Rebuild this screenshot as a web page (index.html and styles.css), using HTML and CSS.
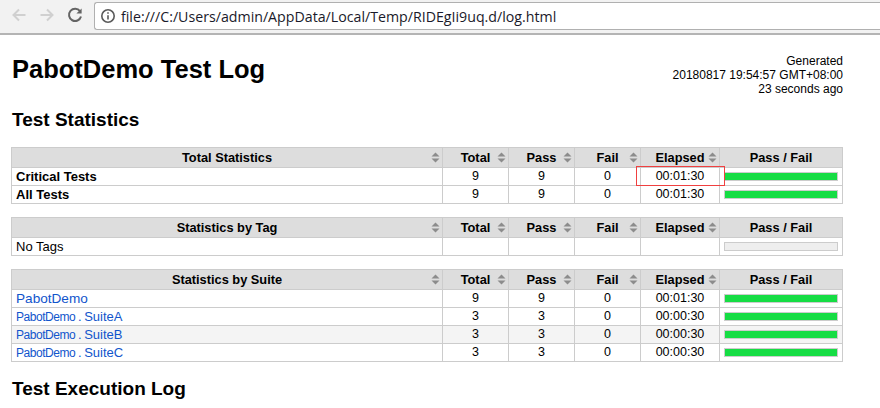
FILE: index.html
```html
<!DOCTYPE html>
<html lang="en">
<head>
    <meta charset="UTF-8">
    <title>PabotDemo Test Log</title>
    <link rel="stylesheet" href="styles.css">
</head>
<body>
    <svg class="defs" width="0" height="0">
        <symbol id="sort" viewBox="0 0 9 11">
            <path d="M4.5 0.5 L8.5 4.5 L0.5 4.5 Z M0.5 6.5 L8.5 6.5 L4.5 10.5 Z"/>
        </symbol>
    </svg>
    <div class="toolbar">
        <svg class="nav-icon" viewBox="0 0 16 16"><path d="M14.5 8H2.5M8 2.5L2.5 8L8 13.5"/></svg>
        <svg class="nav-icon" viewBox="0 0 16 16"><path d="M1.5 8H13.5M8 2.5L13.5 8L8 13.5"/></svg>
        <svg class="nav-icon reload" viewBox="0 0 16 16">
            <path d="M13 4.2A6.1 6.1 0 1 0 14 9.5"/>
            <path class="solid" d="M14.6 1.4V6.6H9.4Z"/>
        </svg>
        <div class="address">
            <svg class="info" viewBox="0 0 16 16">
                <circle cx="8" cy="8" r="6.2"/>
                <path d="M8 7.2V11.6M8 4.2V5.8"/>
            </svg>
            <span class="url">file:///C:/Users/admin/AppData/Local/Temp/RIDEgIi9uq.d/log.html</span>
        </div>
    </div>

    <div class="page">
        <div class="header">
            <h1>PabotDemo Test Log</h1>
            <div class="generated">Generated<br>20180817 19:54:57 GMT+08:00<br>23 seconds ago</div>
        </div>

        <h2 class="stats-title">Test Statistics</h2>

        <table class="stats">
            <tr>
                <th class="name"><div class="th-in"><span>Total Statistics</span><svg class="sort"><use href="#sort"/></svg></div></th>
                <th class="num"><div class="th-in"><span>Total</span><svg class="sort"><use href="#sort"/></svg></div></th>
                <th class="num"><div class="th-in"><span>Pass</span><svg class="sort"><use href="#sort"/></svg></div></th>
                <th class="num"><div class="th-in"><span>Fail</span><svg class="sort"><use href="#sort"/></svg></div></th>
                <th class="time"><div class="th-in"><span>Elapsed</span><svg class="sort"><use href="#sort"/></svg></div></th>
                <th class="graph">Pass / Fail</th>
            </tr>
            <tr>
                <td class="name bold">Critical Tests</td><td>9</td><td>9</td><td>0</td>
                <td class="marked">00:01:30<div class="red-box"></div></td>
                <td><div class="bar"><div class="bar-pass"></div></div></td>
            </tr>
            <tr>
                <td class="name bold">All Tests</td><td>9</td><td>9</td><td>0</td><td>00:01:30</td>
                <td><div class="bar"><div class="bar-pass"></div></div></td>
            </tr>
        </table>

        <table class="stats">
            <tr>
                <th class="name"><div class="th-in"><span>Statistics by Tag</span><svg class="sort"><use href="#sort"/></svg></div></th>
                <th class="num"><div class="th-in"><span>Total</span><svg class="sort"><use href="#sort"/></svg></div></th>
                <th class="num"><div class="th-in"><span>Pass</span><svg class="sort"><use href="#sort"/></svg></div></th>
                <th class="num"><div class="th-in"><span>Fail</span><svg class="sort"><use href="#sort"/></svg></div></th>
                <th class="time"><div class="th-in"><span>Elapsed</span><svg class="sort"><use href="#sort"/></svg></div></th>
                <th class="graph">Pass / Fail</th>
            </tr>
            <tr>
                <td class="name">No Tags</td><td></td><td></td><td></td><td></td>
                <td><div class="bar"></div></td>
            </tr>
        </table>

        <table class="stats">
            <tr>
                <th class="name"><div class="th-in"><span>Statistics by Suite</span><svg class="sort"><use href="#sort"/></svg></div></th>
                <th class="num"><div class="th-in"><span>Total</span><svg class="sort"><use href="#sort"/></svg></div></th>
                <th class="num"><div class="th-in"><span>Pass</span><svg class="sort"><use href="#sort"/></svg></div></th>
                <th class="num"><div class="th-in"><span>Fail</span><svg class="sort"><use href="#sort"/></svg></div></th>
                <th class="time"><div class="th-in"><span>Elapsed</span><svg class="sort"><use href="#sort"/></svg></div></th>
                <th class="graph">Pass / Fail</th>
            </tr>
            <tr>
                <td class="name"><a class="top-suite" href="#">PabotDemo</a></td><td>9</td><td>9</td><td>0</td><td>00:01:30</td>
                <td><div class="bar"><div class="bar-pass"></div></div></td>
            </tr>
            <tr>
                <td class="name"><a href="#"><span class="parent">PabotDemo</span> . SuiteA</a></td><td>3</td><td>3</td><td>0</td><td>00:00:30</td>
                <td><div class="bar"><div class="bar-pass"></div></div></td>
            </tr>
            <tr class="even">
                <td class="name"><a href="#"><span class="parent">PabotDemo</span> . SuiteB</a></td><td>3</td><td>3</td><td>0</td><td>00:00:30</td>
                <td><div class="bar"><div class="bar-pass"></div></div></td>
            </tr>
            <tr>
                <td class="name"><a href="#"><span class="parent">PabotDemo</span> . SuiteC</a></td><td>3</td><td>3</td><td>0</td><td>00:00:30</td>
                <td><div class="bar"><div class="bar-pass"></div></div></td>
            </tr>
        </table>

        <h2 class="log-title">Test Execution Log</h2>
    </div>
</body>
</html>
```

FILE: styles.css
```css
html, body {
    margin: 0;
    padding: 0;
    height: 408px;
    overflow: hidden;
    background: white;
}
body {
    font-family: "Liberation Sans", Arial, sans-serif;
    font-size: 12px;
    color: black;
}
.defs {
    position: absolute;
}

/* browser chrome */
.toolbar {
    height: 35px;
    box-sizing: border-box;
    border-bottom: 2px solid #b4b4b4;
    background: #f2f2f2;
    display: flex;
    align-items: flex-start;
    padding: 7px 0 0 11px;
}
.nav-icon {
    width: 16px;
    height: 16px;
    margin-right: 12px;
    fill: none;
    stroke: #d0d0d0;
    stroke-width: 2;
}
.reload {
    stroke: #646464;
    margin-right: 0;
}
.reload .solid {
    fill: #646464;
    stroke: none;
}
.address {
    margin: -5px 0 0 11px;
    flex: 1;
    height: 28px;
    box-sizing: border-box;
    background: white;
    border: 1px solid #b0b0b0;
    border-right: none;
    border-radius: 3px 0 0 3px;
    display: flex;
    align-items: center;
    padding-left: 5px;
}
.info {
    width: 16px;
    height: 16px;
    fill: none;
    stroke: #5a5a5a;
    stroke-width: 1.6;
    margin-right: 5px;
}
.url {
    font-family: "Open Sans", sans-serif;
    font-size: 14.2px;
    color: #1a1a2a;
}

/* report */
.page {
    padding: 0 37px 0 11px;
}
.header {
    display: flex;
    justify-content: space-between;
    align-items: flex-start;
    padding-top: 19px;
}
h1 {
    margin: 0 0 0 1px;
    font-size: 25.5px;
    line-height: 31px;
}
.generated {
    text-align: right;
    line-height: 14px;
}
h2 {
    margin: 0 0 0 1px;
    font-size: 19px;
    line-height: 22px;
}
.stats-title {
    margin-top: 13px;
}
.log-title {
    margin-top: 16px;
}

.stats {
    width: 832px;
    border-collapse: collapse;
    table-layout: fixed;
    margin-top: 13px;
}
.stats-title + .stats {
    margin-top: 16px;
}
.stats th, .stats td {
    border: 1px solid #ccc;
    padding: 0;
    text-align: center;
    font-size: 12.5px;
}
.stats th {
    background: #ddd;
    height: 19px;
    font-weight: bold;
    font-size: 12.8px;
}
.stats td {
    height: 17px;
    line-height: 17px;
}
.th-in {
    display: grid;
    grid-template-columns: 1fr auto 1fr;
    align-items: center;
}
.th-in span {
    grid-column: 2;
}
.sort {
    grid-column: 3;
    justify-self: end;
    width: 9px;
    height: 11px;
    margin-right: 2px;
    fill: #8c8c8c;
}
.stats .num {
    width: 65px;
}
.stats .time {
    width: 78px;
}
.stats .graph {
    width: 122px;
}
.stats td.name {
    text-align: left;
    padding-left: 4px;
    font-size: 13px;
}
.bold {
    font-weight: bold;
}
.even td {
    background: #f4f4f4;
}
a {
    color: #15c;
    text-decoration: none;
    word-spacing: -1px;
}
.stats td.name .top-suite {
    font-size: 13.6px;
    line-height: 0;
}
.parent {
    font-size: 12px;
    letter-spacing: -0.45px;
    line-height: 0;
}
.bar {
    height: 7px;
    margin: 0 4px;
    background: #eee;
    border: 1px solid #ccc;
}
.bar-pass {
    height: 100%;
    background: #16dd44;
}
.marked {
    position: relative;
}
.red-box {
    position: absolute;
    left: -5px;
    right: -6px;
    top: -2px;
    bottom: -1px;
    border: 1px solid #f04040;
}
```
